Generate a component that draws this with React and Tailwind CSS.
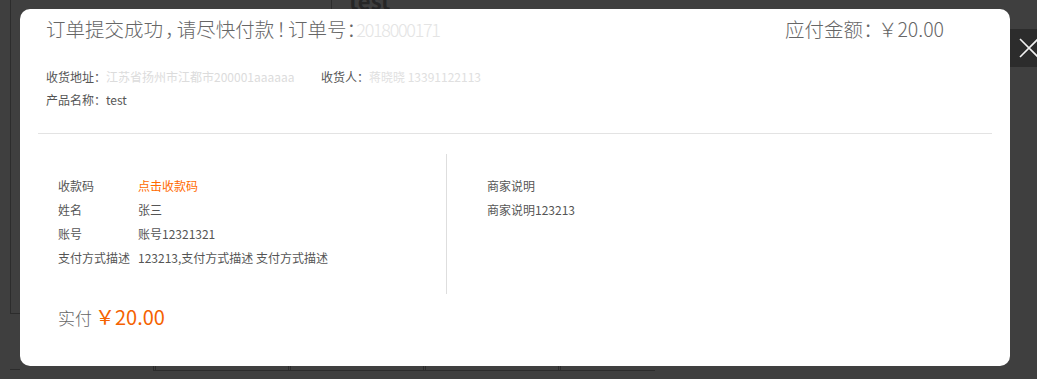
const rows = [
  { label: "收款码", value: "点击收款码", accent: true },
  { label: "姓名", value: "张三" },
  { label: "账号", value: "账号12321321" },
  { label: "支付方式描述", value: "123213,支付方式描述 支付方式描述" },
];

function PageBehind() {
  return (
    <div className="pl-[10px]">
      <div className="flex h-[314px] w-[660px] border-b border-l border-[#2c2c2c]">
        <div className="w-[320px]" />
        <div className="border-l border-[#2c2c2c] pl-[17px]">
          <p className="-mt-[14px] text-[22px] font-bold leading-[28px] text-[#262626]">test</p>
        </div>
      </div>
      <div className="mt-[42px] flex">
        <div className="h-[14px] w-[10px] border-b border-[#2c2c2c]" />
        <div className="ml-[133px] flex border-b border-[#2c2c2c]">
          {[0, 1, 2, 3].map((i) => (
            <div
              key={i}
              className="h-[14px] w-[135px] border-l-[3px] border-double border-[#2c2c2c] last:w-[97px]"
            />
          ))}
        </div>
      </div>
    </div>
  );
}

export default function App() {
  return (
    <div
      className="relative h-[379px] w-[1037px] overflow-hidden bg-[#3f3f3f]"
      style={{ fontFamily: '"Noto Sans CJK SC", "Noto Sans", sans-serif' }}
    >
      <PageBehind />

      {/* modal */}
      <div className="absolute left-[20px] top-[9px] h-[357px] w-[990px] rounded-[10px] bg-white pt-[5px]">
        <div className="flex items-center justify-between pl-[26px] pr-[66px] text-[19.5px] font-light leading-[30px] text-[#666] [font-feature-settings:'halt']">
          <p>
            订单提交成功<span className="px-[2px]">，</span>请尽快付款<span className="px-[2px]">！</span>订单号：
            <span className="text-[18px] tracking-[-1.3px] text-[#e4e4e4]">2018000171</span>
          </p>
          <p>
            应付金额<span className="pr-[5px]">：</span>￥20.00
          </p>
        </div>

        <div className="mt-[21px] pl-[26px] text-[12px] leading-[23px] text-[#555]">
          <div className="flex">
            <p className="w-[275px]">
              收货地址：<span className="text-[#dcdcdc]">江苏省扬州市江都市200001aaaaaa</span>
            </p>
            <p>
              收货人：<span className="text-[#e0e0e0]">蒋晓晓 13391122113</span>
            </p>
          </div>
          <p>产品名称：test</p>
        </div>

        <div className="mx-[18px] mt-[22px] border-t border-[#e3e3e3]" />

        <div className="mt-[20px] flex text-[12px] leading-[24px] text-[#555]">
          <div className="w-[427px] border-r border-[#dedede] pb-[24px] pl-[38px] pt-[20px]">
            {rows.map((r) => (
              <div key={r.label} className="flex">
                <span className="w-[80px]">{r.label}</span>
                <span className={r.accent ? "text-[#ff6a00]" : ""}>{r.value}</span>
              </div>
            ))}
          </div>
          <div className="pl-[40px] pt-[20px]">
            <p>商家说明</p>
            <p>商家说明123213</p>
          </div>
        </div>

        <p className="mt-[8px] flex items-baseline pl-[38px] leading-[30px]">
          <span className="mr-[3px] text-[17px] font-light text-[#666]">实付</span>
          <span className="text-[20px] text-[#f56200]">￥20.00</span>
        </p>
      </div>

      {/* close button */}
      <button className="absolute left-[1010px] top-[29px] flex h-[38px] w-[40px] items-center bg-[#2c2c2c] pl-[9px]">
        <svg width="20" height="20" viewBox="0 0 20 20" fill="none" stroke="#f2f2f2" strokeWidth="1.6">
          <path d="M1 1 L19 19 M19 1 L1 19" />
        </svg>
      </button>
    </div>
  );
}
